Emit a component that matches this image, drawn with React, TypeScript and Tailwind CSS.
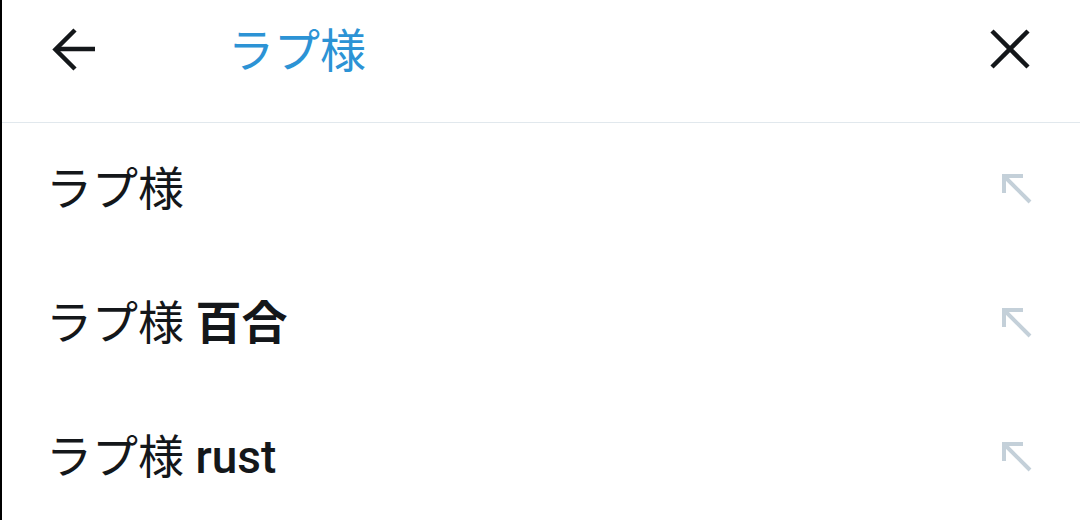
const suggestions: { base: string; extra?: string; weight?: string }[] = [
  { base: "ラプ様" },
  { base: "ラプ様", extra: "百合", weight: "font-bold" },
  { base: "ラプ様", extra: "rust", weight: "font-medium" },
]

function BackArrow() {
  return (
    <svg width="48" height="48" viewBox="0 0 48 48" fill="none" stroke="#14171a" strokeWidth="4.5" strokeLinecap="butt">
      <path d="M45 24H6" />
      <path d="M25 5L5.5 24.5L25 44" />
    </svg>
  )
}

function CloseIcon() {
  return (
    <svg width="40" height="40" viewBox="0 0 40 40" fill="none" stroke="#14171a" strokeWidth="4.5">
      <path d="M2 2L38 38" />
      <path d="M38 2L2 38" />
    </svg>
  )
}

function FillArrow() {
  return (
    <svg width="30" height="30" viewBox="0 0 30 30" fill="none" stroke="#c4d0d9" strokeWidth="4">
      <path d="M2 2H21" />
      <path d="M2 0V19" />
      <path d="M2 2L28 28" />
    </svg>
  )
}

export default function App() {
  return (
    <div
      className="w-[1080px] h-[520px] overflow-hidden bg-white border-l-2 border-black"
      style={{ fontFamily: '"Roboto", "Noto Sans CJK JP", sans-serif' }}
    >
      <div className="h-[123px] border-b-[1.5px] border-[#e1e8ed] flex items-start pt-[25px]">
        <div className="w-[226px] pl-[48px]">
          <BackArrow />
        </div>
        <div className="flex-1 text-[46px] leading-[50px] text-[#2c93d5] pt-[1px]">ラプ様</div>
        <div className="pr-[50px] pt-[4px]">
          <CloseIcon />
        </div>
      </div>
      {suggestions.map((s, i) => (
        <div key={i} className="h-[134px] flex items-center pl-[44px] pr-[48px] pb-[3px]">
          <div className="flex-1 text-[46px] leading-none text-[#14171a]">
            {s.base}
            {s.extra && <span className={s.weight}> {s.extra}</span>}
          </div>
          <FillArrow />
        </div>
      ))}
    </div>
  )
}
